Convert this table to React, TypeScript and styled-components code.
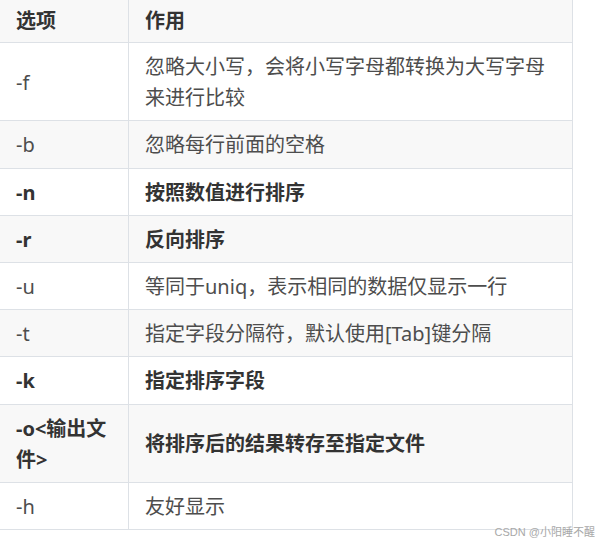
import React from 'react';
import styled, { createGlobalStyle } from 'styled-components';

const rows = [
  { opt: '-f', desc: '忽略大小写，会将小写字母都转换为大写字母来进行比较', bold: false },
  { opt: '-b', desc: '忽略每行前面的空格', bold: false },
  { opt: '-n', desc: '按照数值进行排序', bold: true },
  { opt: '-r', desc: '反向排序', bold: true },
  { opt: '-u', desc: '等同于uniq，表示相同的数据仅显示一行', bold: false },
  { opt: '-t', desc: '指定字段分隔符，默认使用[Tab]键分隔', bold: false },
  { opt: '-k', desc: '指定排序字段', bold: true },
  { opt: '-o<输出文件>', desc: '将排序后的结果转存至指定文件', bold: true },
  { opt: '-h', desc: '友好显示', bold: false },
];

const GlobalStyle = createGlobalStyle`
  body {
    margin: 0;
    background: #ffffff;
    font-family: "Noto Sans", "Noto Sans CJK SC", sans-serif;
  }
`;

const Page = styled.div`
  position: relative;
  width: 595px;
  height: 544px;
  overflow: hidden;
  background: #ffffff;
`;

const Table = styled.table`
  border-collapse: collapse;
  table-layout: fixed;
  width: 573px;
  margin-left: -1px;
  font-size: 20px;
  line-height: 31.2px;
  color: #4d4d4d;
`;

const Col = styled.col<{ $w: number }>`
  width: ${({ $w }) => `${$w}px`};
`;

const Row = styled.tr<{ $striped: boolean }>`
  background: ${({ $striped }) => ($striped ? '#f8f8f8' : '#ffffff')};
`;

const HeadCell = styled.th`
  padding: 5px 16px 6px;
  line-height: 31px;
  text-align: left;
  font-weight: 700;
  color: #333333;
  border: 1px solid #dde1e6;
  border-top: none;
`;

const Cell = styled.td<{ $bold: boolean }>`
  padding: 8px 16px 7px;
  vertical-align: middle;
  font-weight: ${({ $bold }) => ($bold ? 700 : 400)};
  color: ${({ $bold }) => ($bold ? '#333333' : '#4d4d4d')};
  border: 1px solid #dde1e6;
  word-break: break-all;
`;

const Watermark = styled.div`
  position: absolute;
  right: 0;
  top: 524px;
  font-size: 11px;
  line-height: 16px;
  color: #a8a8a8;
  white-space: nowrap;
  font-family: "Liberation Sans", "Noto Sans CJK SC", sans-serif;
`;

export default function App() {
  return (
    <Page>
      <GlobalStyle />
      <Table>
        <colgroup>
          <Col $w={129} />
          <Col $w={444} />
        </colgroup>
        <thead>
          <Row $striped>
            <HeadCell>选项</HeadCell>
            <HeadCell>作用</HeadCell>
          </Row>
        </thead>
        <tbody>
          {rows.map((r, i) => (
            <Row key={r.opt} $striped={i % 2 === 1}>
              <Cell $bold={r.bold}>{r.opt}</Cell>
              <Cell $bold={r.bold}>{r.desc}</Cell>
            </Row>
          ))}
        </tbody>
      </Table>
      <Watermark>CSDN @小阳睡不醒</Watermark>
    </Page>
  );
}
